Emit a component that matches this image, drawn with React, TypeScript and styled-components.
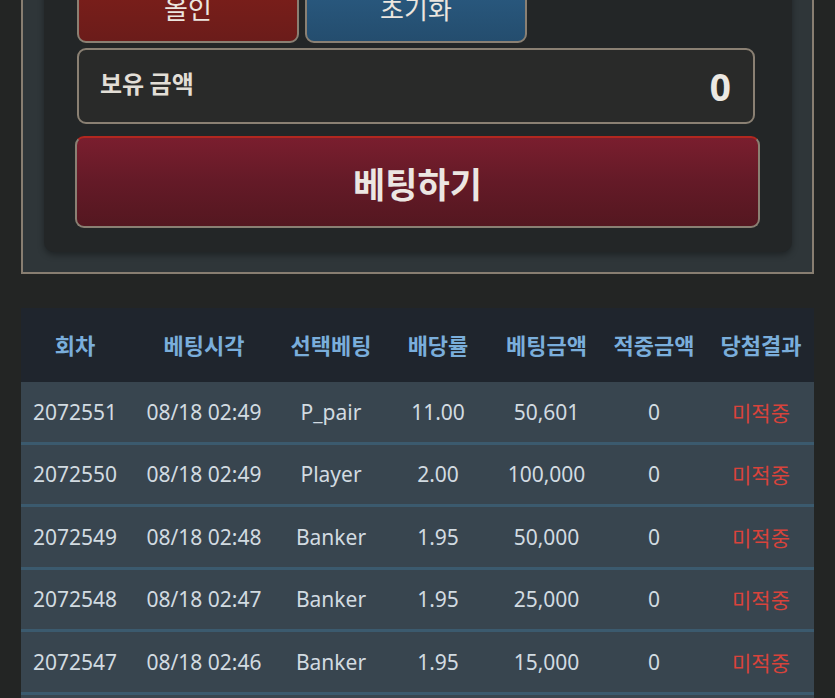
import React from 'react';
import styled, { createGlobalStyle } from 'styled-components';

const GlobalStyle = createGlobalStyle`
  html, body {
    margin: 0;
    padding: 0;
    background: #232524;
    font-family: 'Noto Sans', 'Noto Sans CJK KR', sans-serif;
    overflow: hidden;
  }
`;

const Page = styled.div`
  margin-top: -31px;
  padding: 0 21px;
  display: flex;
  flex-direction: column;
  gap: 34px;
`;

const Frame = styled.div`
  border: 2px solid #887e71;
  background: #2f3639;
  padding: 0 20px 20px 21px;
`;

const Panel = styled.div`
  background: #232627;
  border-radius: 0 0 10px 10px;
  box-shadow: 0 3px 6px rgba(0, 0, 0, 0.35);
  padding: 0 32px 24px 31px;
  display: flex;
  flex-direction: column;
`;

const ButtonRow = styled.div`
  display: grid;
  grid-template-columns: repeat(3, 222px);
  gap: 6px;
  margin: 0 5px 5px 2px;
`;

const TopButton = styled.button<{ $tone: 'red' | 'blue' }>`
  height: 72px;
  border: 2px solid #8a8073;
  border-radius: 9px;
  background: ${(p) =>
    p.$tone === 'red'
      ? 'linear-gradient(180deg, #801f1a 0%, #6b1c1a 100%)'
      : 'linear-gradient(180deg, #2b5d85 0%, #244d6e 100%)'};
  color: #ece6df;
  font-family: 'Noto Sans CJK KR', sans-serif;
  font-size: 26px;
  padding: 0;
`;

const Balance = styled.div`
  height: 76px;
  box-sizing: border-box;
  margin: 0 5px 12px 2px;
  border: 2px solid #8a8073;
  border-radius: 9px;
  background: #292a29;
  display: flex;
  align-items: center;
  justify-content: space-between;
  padding: 0 22px 0 21px;
`;

const BalanceLabel = styled.span`
  color: #e2ded6;
  font-family: 'Noto Sans CJK KR', sans-serif;
  font-size: 24px;
  font-weight: 700;
  margin-top: -7px;
`;

const BalanceValue = styled.span`
  color: #ece8e2;
  font-size: 37px;
  font-weight: 700;
`;

const BetButton = styled.button`
  height: 92px;
  border: 2px solid #8a8073;
  border-top-color: #b1271f;
  border-radius: 9px;
  background: linear-gradient(180deg, #7a1e2e 0%, #641a27 50%, #541720 100%);
  color: #ece6e2;
  font-family: 'Noto Sans CJK KR', sans-serif;
  font-size: 35px;
  font-weight: 700;
  padding: 0;
`;

const Table = styled.div`
  display: flex;
  flex-direction: column;
`;

const COLS = '108px 150px 104px 110px 107px 108px 106px';

const HeadRow = styled.div`
  display: grid;
  grid-template-columns: ${COLS};
  height: 74px;
  align-items: center;
  background: #1f252d;
`;

const HeadCell = styled.div`
  text-align: center;
  color: #7aaedb;
  font-family: 'Noto Sans CJK KR', sans-serif;
  font-size: 22px;
  font-weight: 700;
  white-space: nowrap;
  margin-top: -3px;
`;

const BodyRow = styled.div`
  display: grid;
  grid-template-columns: ${COLS};
  height: 59.5px;
  align-items: center;
  background: #38454f;
  border-bottom: 3px solid #3b5a6e;
`;

const Cell = styled.div<{ $miss?: boolean }>`
  text-align: center;
  color: ${(p) => (p.$miss ? '#d8433b' : '#d2dbe1')};
  font-size: 21px;
  white-space: nowrap;
`;

const headers = ['회차', '베팅시각', '선택베팅', '배당률', '베팅금액', '적중금액', '당첨결과'];

const rows = [
  ['2072551', '08/18 02:49', 'P_pair', '11.00', '50,601', '0'],
  ['2072550', '08/18 02:49', 'Player', '2.00', '100,000', '0'],
  ['2072549', '08/18 02:48', 'Banker', '1.95', '50,000', '0'],
  ['2072548', '08/18 02:47', 'Banker', '1.95', '25,000', '0'],
  ['2072547', '08/18 02:46', 'Banker', '1.95', '15,000', '0'],
  ['2072546', '08/18 02:45', 'Banker', '1.95', '10,000', '0'],
];

export default function App() {
  return (
    <>
      <GlobalStyle />
      <Page>
        <Frame>
          <Panel>
            <ButtonRow>
              <TopButton $tone="red">올인</TopButton>
              <TopButton $tone="blue">초기화</TopButton>
            </ButtonRow>
            <Balance>
              <BalanceLabel>보유 금액</BalanceLabel>
              <BalanceValue>0</BalanceValue>
            </Balance>
            <BetButton>베팅하기</BetButton>
          </Panel>
        </Frame>
        <Table>
          <HeadRow>
            {headers.map((h) => (
              <HeadCell key={h}>{h}</HeadCell>
            ))}
          </HeadRow>
          {rows.map((r) => (
            <BodyRow key={r[0]}>
              {r.map((c, i) => (
                <Cell key={i}>{c}</Cell>
              ))}
              <Cell $miss>미적중</Cell>
            </BodyRow>
          ))}
        </Table>
      </Page>
    </>
  );
}
